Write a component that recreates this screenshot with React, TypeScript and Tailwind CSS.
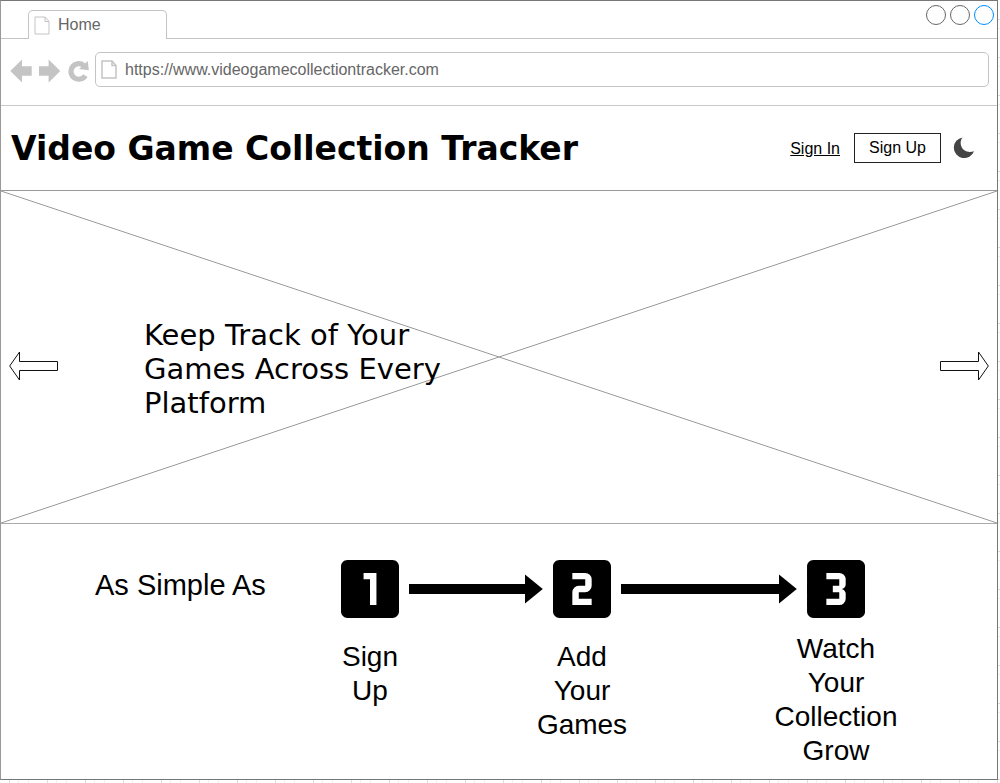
import type { ReactNode } from "react";
import { MdLooksOne, MdLooksTwo, MdLooks3 } from "react-icons/md";

function PageIcon({ className }: { className: string }) {
  return (
    <svg viewBox="0 0 16 19" className={className} fill="none" stroke="currentColor" aria-hidden="true">
      <path d="M1 1H11L15 5.500V18H1Z" />
      <path d="M11 1V5.500H15" />
    </svg>
  );
}

function TabBar() {
  return (
    <div className="flex items-end justify-between border-b border-[#c4c4c4] pl-[27px] pr-[3px] pt-[9px]">
      <div className="-mb-px flex h-[29px] w-[139px] items-center gap-2 rounded-t-[5px] border border-b-0 border-[#c4c4c4] bg-white pl-[5px] text-[#666666]">
        <PageIcon className="h-[19px] w-4 text-[#c4c4c4]" />
        <span>Home</span>
      </div>
      <div className="-mt-[5px] flex gap-1 self-start">
        <button type="button" aria-label="Minimize" className="size-5 rounded-full border border-[#666666]" />
        <button type="button" aria-label="Maximize" className="size-5 rounded-full border border-[#666666]" />
        <button type="button" aria-label="Close" className="size-5 rounded-full border border-[#008cff]" />
      </div>
    </div>
  );
}

function Toolbar() {
  return (
    <div className="flex items-center border-b border-[#c9c9c9] pb-[18px] pl-[9px] pr-2 pt-[13px] text-[#c4c4c4]">
      <div className="mr-[6px] flex items-center gap-[7px] pt-[2px]">
        <button type="button" aria-label="Back">
          <svg viewBox="0 0 22 24" className="h-6 w-[22px]" fill="currentColor">
            <path d="M0.300 12L12 0.500V7.200H21.700V16.800H12V23.500Z" />
          </svg>
        </button>
        <button type="button" aria-label="Forward">
          <svg viewBox="0 0 22 24" className="h-6 w-[22px]" fill="currentColor">
            <path d="M21.300 12L9.600 0.500V7.200H0V16.800H9.600V23.500Z" />
          </svg>
        </button>
        <button type="button" aria-label="Reload">
          <svg viewBox="0 0 21 24" className="h-6 w-[21px]" fill="none">
            <path d="M17.400 16.600A7.800 7.800 0 1 1 15.600 6.300" stroke="currentColor" strokeWidth="5.200" />
            <path d="M19.800 2L20.800 11.200L11 10Z" fill="currentColor" />
          </svg>
        </button>
      </div>
      <div className="flex h-[35px] flex-1 items-center gap-2 rounded-[5px] border border-[#c4c4c4] pl-[5px]">
        <PageIcon className="h-[19px] w-4 stroke-[1.5]" />
        <input
          type="text"
          aria-label="Address"
          defaultValue="https://www.videogamecollectiontracker.com"
          className="min-w-0 flex-1 bg-transparent text-[#666666] outline-none"
        />
      </div>
    </div>
  );
}

function SiteHeader() {
  return (
    <header className="flex h-[85px] items-center justify-between border-b border-[#999999] pl-[10px] pr-[22px]">
      <h1 className="pt-[2px] font-['DejaVu_Sans',sans-serif] text-[33px] font-bold">Video Game Collection Tracker</h1>
      <nav className="flex items-center">
        <a href="#sign-in" className="mr-[14px] pt-[2px] underline">
          Sign In
        </a>
        <button type="button" className="mr-3 h-[30px] w-[87px] border border-[#222222]">
          Sign Up
        </button>
        <button type="button" aria-label="Dark mode">
          <svg viewBox="0 0 22 22" className="size-[22px]" fill="#444444">
            <path d="M9.600 0.400C7.600 2.700 7.100 6 8.200 9C9.800 13.600 15 16.300 21 14.200A10.400 10.400 0 1 1 9.600 0.400Z" />
          </svg>
        </button>
      </nav>
    </header>
  );
}

function Hero() {
  return (
    <section className="relative flex min-h-[333px] items-center border-b border-[#aaaaaa] px-2 pt-[17px]">
      <svg
        viewBox="0 0 100 100"
        preserveAspectRatio="none"
        className="absolute inset-0 size-full"
        stroke="#999999"
        aria-hidden="true"
      >
        <path d="M0 0L100 100M0 100L100 0" vectorEffect="non-scaling-stroke" />
      </svg>
      <button type="button" aria-label="Previous" className="relative">
        <svg viewBox="0 0 50 30" className="h-[30px] w-[50px]" fill="white" stroke="#111111">
          <path d="M0.700 15L10.500 1V10.500H48.500V19.500H10.500V29Z" />
        </svg>
      </button>
      <p className="relative ml-[85px] mt-[6px] w-[310px] font-['DejaVu_Sans',sans-serif] text-[29px] leading-[34px]">
        Keep Track of Your Games Across Every Platform
      </p>
      <button type="button" aria-label="Next" className="relative ml-auto">
        <svg viewBox="0 0 50 30" className="h-[30px] w-[50px]" fill="white" stroke="#111111">
          <path d="M49.300 15L39.500 1V10.500H1.500V19.500H39.500V29Z" />
        </svg>
      </button>
    </section>
  );
}

function StepArrow() {
  return (
    <div className="flex items-center" aria-hidden="true">
      <div className="h-[10px] flex-1 bg-black" />
      <svg viewBox="0 0 18 30" className="h-[30px] w-[18px]">
        <path d="M0 0.500L17.800 15L0 29.500Z" />
      </svg>
    </div>
  );
}

function StepLabel({ className, children }: { className: string; children: ReactNode }) {
  return (
    <div className={`row-start-2 flex justify-center ${className}`}>
      <p className="w-[130px] shrink-0 text-center">{children}</p>
    </div>
  );
}

function Steps() {
  return (
    <section className="grid grid-cols-[236px_58px_134fr_58px_176fr_58px] gap-x-[10px] pb-[11px] pl-[94px] pr-[132px] pt-9 text-[28px] leading-[34px]">
      <h2 className="mb-2 self-center text-[29px]">As Simple As</h2>
      <MdLooksOne viewBox="3 3 18 18" className="size-[58px]" />
      <StepArrow />
      <MdLooksTwo viewBox="3 3 18 18" className="size-[58px]" />
      <StepArrow />
      <MdLooks3 viewBox="3 3 18 18" className="size-[58px]" />
      <StepLabel className="col-start-2 pt-[22px]">
        Sign
        <br />
        Up
      </StepLabel>
      <StepLabel className="col-start-4 pt-[22px]">
        Add
        <br />
        Your
        <br />
        Games
      </StepLabel>
      <StepLabel className="col-start-6 pt-[14px]">
        Watch
        <br />
        Your
        <br />
        Collection
        <br />
        Grow
      </StepLabel>
    </section>
  );
}

export default function App() {
  return (
    <div className="bg-white bg-[repeating-linear-gradient(90deg,transparent_0_9px,#dddddd_9px_10px,transparent_10px_18px,#f0f0f0_18px_19px,transparent_19px_28px,#f0f0f0_28px_29px,transparent_29px_38px),repeating-linear-gradient(180deg,transparent_0_19px,#dddddd_19px_20px,transparent_20px_28px,#f0f0f0_28px_29px,transparent_29px_38px)] pb-[3px] pr-[2px] font-['Liberation_Sans',Arial,sans-serif] text-base text-black">
      <div className="border border-[#777777] border-l-[#999999] bg-white">
        <TabBar />
        <Toolbar />
        <main>
          <SiteHeader />
          <Hero />
          <Steps />
        </main>
      </div>
    </div>
  );
}
